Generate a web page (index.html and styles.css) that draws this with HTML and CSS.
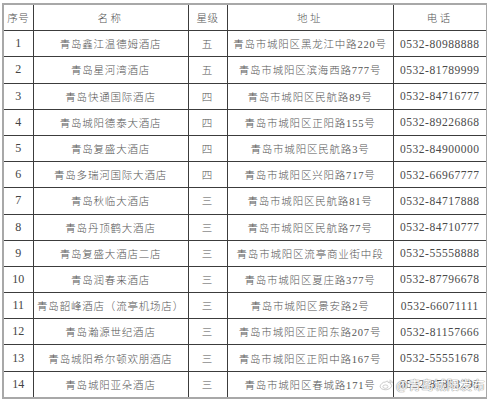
FILE: index.html
```html
<!DOCTYPE html>
<html lang="zh-CN">
<head>
<meta charset="utf-8">
<title>城阳区星级酒店名单</title>
<link rel="stylesheet" href="styles.css">
</head>
<body>
<div class="page">
  <table class="hotels">
    <colgroup>
      <col class="c-no"><col class="c-name"><col class="c-star"><col class="c-addr"><col class="c-tel">
    </colgroup>
    <thead>
      <tr><th>序号</th><th class="wide">名称</th><th>星级</th><th class="wide">地址</th><th class="wide">电话</th></tr>
    </thead>
    <tbody>
      <tr><td class="no">1</td><td class="cn">青岛鑫江温德姆酒店</td><td class="cn">五</td><td class="cn">青岛市城阳区黑龙江中路220号</td><td class="tel">0532-80988888</td></tr>
      <tr><td class="no">2</td><td class="cn">青岛星河湾酒店</td><td class="cn">五</td><td class="cn">青岛市城阳区滨海西路777号</td><td class="tel">0532-81789999</td></tr>
      <tr><td class="no">3</td><td class="cn">青岛快通国际酒店</td><td class="cn">四</td><td class="cn">青岛市城阳区民航路89号</td><td class="tel">0532-84716777</td></tr>
      <tr><td class="no">4</td><td class="cn">青岛城阳德泰大酒店</td><td class="cn">四</td><td class="cn">青岛市城阳区正阳路155号</td><td class="tel">0532-89226868</td></tr>
      <tr><td class="no">5</td><td class="cn">青岛复盛大酒店</td><td class="cn">四</td><td class="cn">青岛市城阳区民航路3号</td><td class="tel">0532-84900000</td></tr>
      <tr><td class="no">6</td><td class="cn">青岛多瑞河国际大酒店</td><td class="cn">四</td><td class="cn">青岛市城阳区兴阳路717号</td><td class="tel">0532-66967777</td></tr>
      <tr><td class="no">7</td><td class="cn">青岛秋临大酒店</td><td class="cn">三</td><td class="cn">青岛市城阳区民航路81号</td><td class="tel">0532-84717888</td></tr>
      <tr><td class="no">8</td><td class="cn">青岛丹顶鹤大酒店</td><td class="cn">三</td><td class="cn">青岛市城阳区民航路77号</td><td class="tel">0532-84710777</td></tr>
      <tr><td class="no">9</td><td class="cn">青岛复盛大酒店二店</td><td class="cn">三</td><td class="cn">青岛市城阳区流亭商业街中段</td><td class="tel">0532-55558888</td></tr>
      <tr><td class="no">10</td><td class="cn">青岛润春来酒店</td><td class="cn">三</td><td class="cn">青岛市城阳区夏庄路377号</td><td class="tel">0532-87796678</td></tr>
      <tr><td class="no">11</td><td class="cn">青岛韶峰酒店（流亭机场店）</td><td class="cn">三</td><td class="cn">青岛市城阳区景安路2号</td><td class="tel">0532-66071111</td></tr>
      <tr><td class="no">12</td><td class="cn">青岛瀚源世纪酒店</td><td class="cn">三</td><td class="cn">青岛市城阳区正阳东路207号</td><td class="tel">0532-81157666</td></tr>
      <tr><td class="no">13</td><td class="cn">青岛城阳希尔顿欢朋酒店</td><td class="cn">三</td><td class="cn">青岛市城阳区正阳中路167号</td><td class="tel">0532-55551678</td></tr>
      <tr><td class="no">14</td><td class="cn">青岛城阳亚朵酒店</td><td class="cn">三</td><td class="cn">青岛市城阳区春城路171号</td><td class="tel">0532-87853298</td></tr>
    </tbody>
  </table>
  <div class="watermark">
    <svg class="wb" viewBox="0 0 20 16" width="15" height="12" aria-hidden="true">
      <path d="M8.2 4.2c2.6-1.9 4.6-1.6 4.1 0.6 1.8-0.9 3.3-0.3 2.5 1.5 1.3 0.4 2.1 1.2 2.1 2.4 0 2.7-3.6 5.6-8.4 5.6-3.8 0-6.9-1.8-6.9-4.3 0-1.8 1.7-4 4.2-5.6z" fill="#fff" stroke="#aaa" stroke-width="0.9"/>
      <ellipse cx="8.6" cy="10.2" rx="3.4" ry="2.3" fill="#fff" stroke="#aaa" stroke-width="0.8"/>
      <path d="M14.6 1.6c1.9 0.2 3.3 1.6 3.4 3.5M14.5 3.2c0.9 0.1 1.6 0.8 1.7 1.7" fill="none" stroke="#aaa" stroke-width="0.9" stroke-linecap="round"/>
    </svg>
    <span class="wm-text">@青岛城阳发布</span>
  </div>
</div>
</body>
</html>
```

FILE: styles.css
```css
html, body {
  margin: 0;
  padding: 0;
  background: #ffffff;
}

.page {
  position: relative;
  width: 487px;
  height: 400px;
  padding: 3px 0 0 2px;
  box-sizing: border-box;
  overflow: hidden;
}

.hotels {
  border-collapse: collapse;
  table-layout: fixed;
  width: 484px;
  border: 2px solid #a8a8a8;
  color: #4a4a4a;
  font-family: "Liberation Serif", "Noto Sans CJK SC", serif;
}

.c-no { width: 30px; }
.c-name { width: 155px; }
.c-star { width: 39px; }
.c-addr { width: 166px; }
.c-tel { width: 94px; }

.hotels th,
.hotels td {
  border: 1px solid #3c3c3c;
  height: 25.2px;
  padding: 0;
  text-align: center;
  vertical-align: middle;
  white-space: nowrap;
  overflow: hidden;
}

.hotels th {
  font-family: "Noto Sans CJK SC", sans-serif;
  font-weight: 300;
  font-size: 10.5px;
  color: #555;
  letter-spacing: 0.5px;
}

.hotels th.wide {
  letter-spacing: 2.5px;
}

.hotels td.cn {
  font-family: "Liberation Serif", "Noto Sans CJK SC", serif;
  font-weight: 300;
  font-size: 10.5px;
  letter-spacing: 0.8px;
  color: #555;
}

.hotels td.no {
  font-size: 12px;
  color: #444;
}

.hotels td.tel {
  font-size: 11.5px;
  letter-spacing: 0.5px;
  color: #4a4a4a;
}

.watermark {
  position: absolute;
  right: 2px;
  bottom: 6px;
  display: flex;
  align-items: center;
  gap: 2px;
  opacity: 0.9;
}

.wb {
  display: block;
}

.wm-text {
  font-family: "Noto Sans CJK SC", sans-serif;
  font-size: 12.5px;
  color: #ffffff;
  letter-spacing: 0.3px;
  text-shadow: 0 0 1px #888, 0 0 1px #888, 0 0 1px #999;
}
```
